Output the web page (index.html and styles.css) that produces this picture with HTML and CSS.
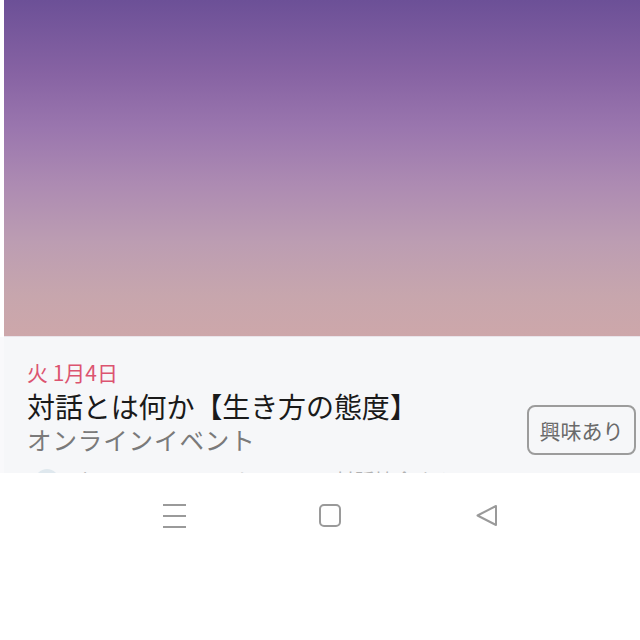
FILE: index.html
```html
<!DOCTYPE html>
<html lang="ja">
<head>
<meta charset="utf-8">
<link rel="stylesheet" href="styles.css">
</head>
<body>
<div class="screen">
  <div class="hero"></div>
  <div class="card">
    <div class="date">火 1月4日</div>
    <div class="main">
      <div class="info">
        <div class="title">対話とは何か【生き方の態度】</div>
        <div class="place">オンラインイベント</div>
      </div>
      <div class="btn">興味あり</div>
    </div>
    <div class="host">
      <span class="avatar"></span>
      <span class="host-text">ネット・コミュニケーション対話協会さん</span>
    </div>
  </div>
  <div class="nav">
    <svg class="ico" width="26" height="26" viewBox="0 0 26 26"><path d="M2 3H25M2 14H25M2 25H25" stroke="#9a9a9a" stroke-width="2" fill="none"/></svg>
    <svg class="ico" width="26" height="26" viewBox="0 0 26 26"><rect x="2" y="3" width="20" height="21" rx="4" stroke="#9a9a9a" stroke-width="2" fill="none"/></svg>
    <svg class="ico" width="26" height="26" viewBox="0 0 26 26"><path d="M21 4V23L2.5 13.5Z" stroke="#9a9a9a" stroke-width="2" stroke-linejoin="round" fill="none"/></svg>
  </div>
</div>
</body>
</html>
```
FILE: styles.css
```css
* { box-sizing: border-box; }
html, body { margin: 0; padding: 0; background: #ffffff; }
body { font-family: "Noto Sans CJK JP", "Noto Sans", sans-serif; }
.screen { width: 640px; height: 640px; display: flex; flex-direction: column; background: #fff; overflow: hidden; }
.hero {
  height: 337px;
  margin-left: 4px;
  border-bottom: 1px solid #e9e4ea;
  background: linear-gradient(180deg, #6c5097 0%, #8763a3 22%, #9a76ae 38%, #ad8bb2 55%, #bc9db2 72%, #c7a6ad 88%, #cda7aa 100%);
}
.card {
  height: 136px;
  background: #f6f7f9;
  border-left: 4px solid #f9f9fb;
  padding: 20px 0 0 23px;
  overflow: hidden;
}
.date { color: #dc5470; font-size: 21px; line-height: 30px; height: 30px; }
.main { display: flex; align-items: flex-start; }
.info { flex: 1; }
.title { color: #1a1a1a; font-size: 28px; line-height: 36px; margin-top: 1px; letter-spacing: -0.1px; }
.place { color: #7a7a7a; font-size: 24.5px; line-height: 32px; letter-spacing: 0.9px; }
.btn {
  margin-top: 18px;
  margin-right: 4px;
  width: 109px; height: 50px;
  border: 2px solid #9c9c9c; border-radius: 8px;
  color: #6a6a6a; font-size: 21px;
  display: flex; align-items: center; justify-content: center;
}
.host { display: flex; align-items: flex-start; gap: 16px; margin-top: 13px; padding-left: 8px; }
.avatar { width: 24px; height: 24px; border-radius: 50%; background: #dfe8ee; flex: none; }
.host-text { color: #b0b0b0; font-size: 20px; line-height: 24px; }
.nav { display: flex; padding: 29px 0 0 161px; gap: 131px; }
.ico { display: block; }
```
